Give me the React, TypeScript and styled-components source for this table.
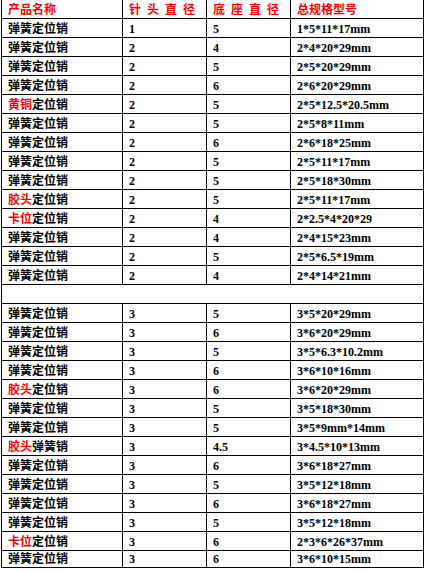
import { FC } from "react";
import styled, { createGlobalStyle } from "styled-components";
//
interface Item {
  tag?: string;
  name: string;
  pin: string;
  base: string;
  spec: string;
}
//
const first: Item[] = [
  { name: "弹簧定位销", pin: "1", base: "5", spec: "1*5*11*17mm" },
  { name: "弹簧定位销", pin: "2", base: "4", spec: "2*4*20*29mm" },
  { name: "弹簧定位销", pin: "2", base: "5", spec: "2*5*20*29mm" },
  { name: "弹簧定位销", pin: "2", base: "6", spec: "2*6*20*29mm" },
  { tag: "黄铜", name: "定位销", pin: "2", base: "5", spec: "2*5*12.5*20.5mm" },
  { name: "弹簧定位销", pin: "2", base: "5", spec: "2*5*8*11mm" },
  { name: "弹簧定位销", pin: "2", base: "6", spec: "2*6*18*25mm" },
  { name: "弹簧定位销", pin: "2", base: "5", spec: "2*5*11*17mm" },
  { name: "弹簧定位销", pin: "2", base: "5", spec: "2*5*18*30mm" },
  { tag: "胶头", name: "定位销", pin: "2", base: "5", spec: "2*5*11*17mm" },
  { tag: "卡位", name: "定位销", pin: "2", base: "4", spec: "2*2.5*4*20*29" },
  { name: "弹簧定位销", pin: "2", base: "4", spec: "2*4*15*23mm" },
  { name: "弹簧定位销", pin: "2", base: "5", spec: "2*5*6.5*19mm" },
  { name: "弹簧定位销", pin: "2", base: "4", spec: "2*4*14*21mm" },
];
//
const second: Item[] = [
  { name: "弹簧定位销", pin: "3", base: "5", spec: "3*5*20*29mm" },
  { name: "弹簧定位销", pin: "3", base: "6", spec: "3*6*20*29mm" },
  { name: "弹簧定位销", pin: "3", base: "5", spec: "3*5*6.3*10.2mm" },
  { name: "弹簧定位销", pin: "3", base: "6", spec: "3*6*10*16mm" },
  { tag: "胶头", name: "定位销", pin: "3", base: "6", spec: "3*6*20*29mm" },
  { name: "弹簧定位销", pin: "3", base: "5", spec: "3*5*18*30mm" },
  { name: "弹簧定位销", pin: "3", base: "5", spec: "3*5*9mm*14mm" },
  { tag: "胶头", name: "弹簧销", pin: "3", base: "4.5", spec: "3*4.5*10*13mm" },
  { name: "弹簧定位销", pin: "3", base: "6", spec: "3*6*18*27mm" },
  { name: "弹簧定位销", pin: "3", base: "5", spec: "3*5*12*18mm" },
  { name: "弹簧定位销", pin: "3", base: "6", spec: "3*6*18*27mm" },
  { name: "弹簧定位销", pin: "3", base: "5", spec: "3*5*12*18mm" },
  { tag: "卡位", name: "定位销", pin: "3", base: "6", spec: "2*3*6*26*37mm" },
  { name: "弹簧定位销", pin: "3", base: "6", spec: "3*6*10*15mm" },
];
//
const DataRow: FC<{ item: Item; last?: boolean }> = ({ item, last }) => (
  <Row last={last}>
    <Cell w={120}>
      {item.tag && <Red>{item.tag}</Red>}
      {item.name}
    </Cell>
    <Cell w={84}>{item.pin}</Cell>
    <Cell w={84}>{item.base}</Cell>
    <Cell w={134}>{item.spec}</Cell>
  </Row>
);
//
const App: FC = () => {
  return (
    <>
      <GlobalStyle />
      <Sheet>
        <Row>
          <Cell w={120} head>
            产品名称
          </Cell>
          <Cell w={84} head>
            针 头 直 径
          </Cell>
          <Cell w={84} head>
            底 座 直 径
          </Cell>
          <Cell w={134} head>
            总规格型号
          </Cell>
        </Row>
        {first.map((it, i) => (
          <DataRow key={"a" + i} item={it} />
        ))}
        <Row />
        {second.map((it, i) => (
          <DataRow key={"b" + i} item={it} last={i === second.length - 1} />
        ))}
      </Sheet>
    </>
  );
};

export default App;

const GlobalStyle = createGlobalStyle`
  body {
    margin: 0;
    background: #fff;
  }
`;

const Sheet = styled.div`
  margin-left: 1px;
  width: 423px;
  border-left: 1px solid #000;
  border-right: 1px solid #000;
  box-sizing: border-box;
  font-family: "Liberation Serif", "Noto Sans CJK SC", serif;
  font-weight: 700;
  font-size: 12px;
  color: #000;
`;

const Row = styled.div<{ last?: boolean }>`
  display: flex;
  height: ${(p) => (p.last ? 17 : 19)}px;
  border-bottom: 1px solid #000;
  box-sizing: border-box;
  overflow: hidden;
`;

const Cell = styled.div<{ w: number; head?: boolean }>`
  flex: 0 0 ${(p) => p.w}px;
  box-sizing: border-box;
  display: flex;
  align-items: flex-end;
  padding: 0 0 1px 6px;
  line-height: 14px;
  white-space: nowrap;
  word-spacing: 3px;
  color: ${(p) => (p.head ? "#ff0000" : "#000")};
  & + & {
    border-left: 1px solid #000;
  }
  &:last-child {
    border-right: none;
  }
`;

const Red = styled.span`
  color: #ff0000;
`;
